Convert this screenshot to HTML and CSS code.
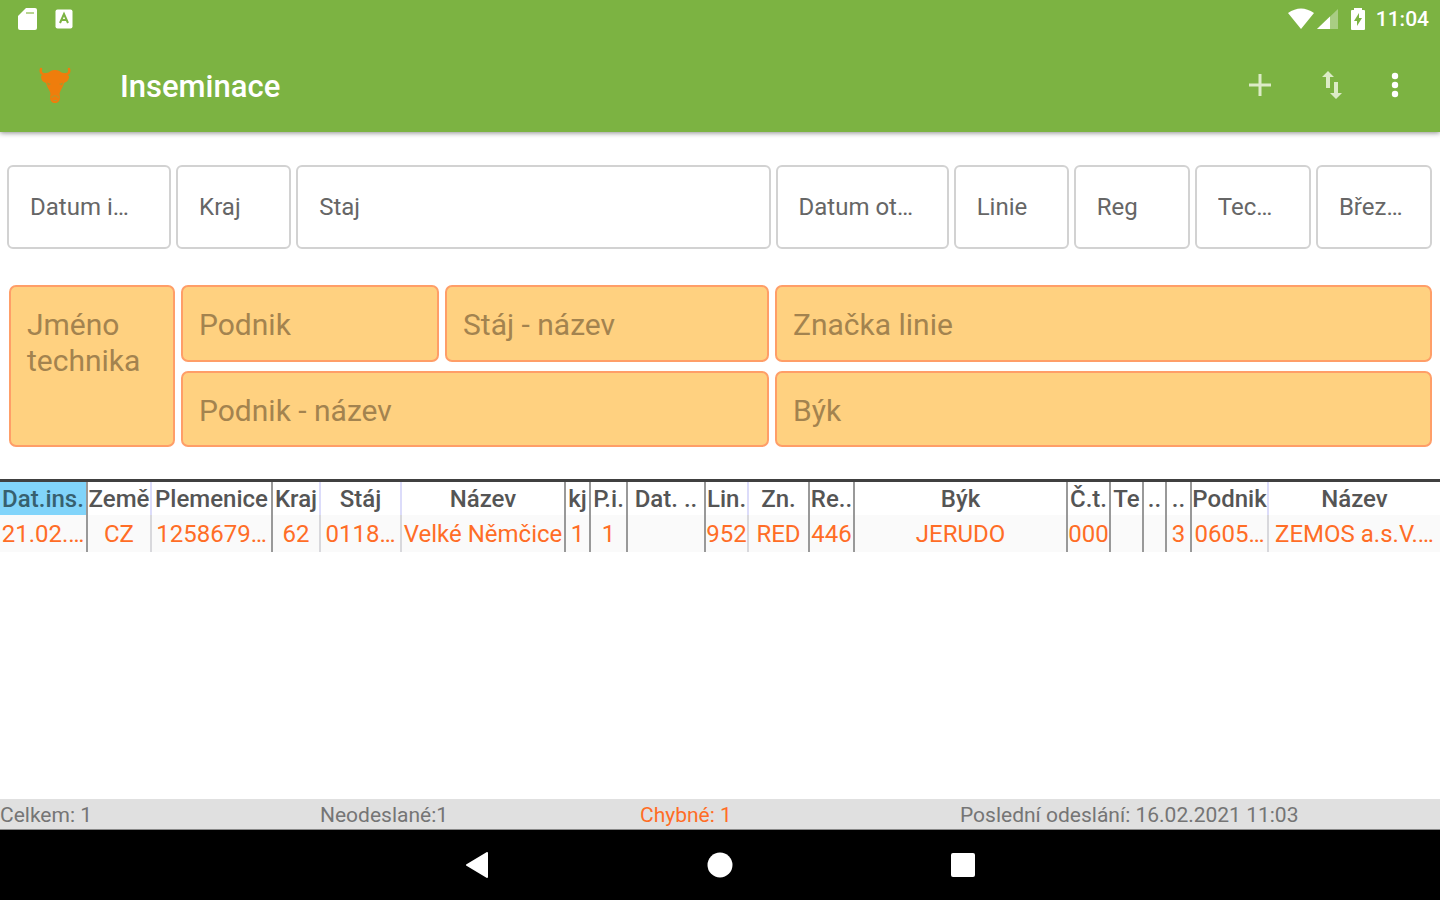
FILE: index.html
```html
<!DOCTYPE html>
<html lang="cs">
  <head>
    <meta charset="UTF-8" />
    <meta name="viewport" content="width=device-width, initial-scale=1.0" />
    <title>Inseminace</title>
    <link rel="stylesheet" href="styles.css">
  </head>
  <body>
    <header class="top">
      <div class="status-bar">
        <div class="status-group">
          <svg width="20" height="22" viewBox="0 0 20 22"><path fill="#fff" d="M8 0h9a2 2 0 0 1 2 2v18a2 2 0 0 1-2 2H2a2 2 0 0 1-2-2V8z"/><path stroke="#b8d591" stroke-width="2" d="M8 5h8"/></svg>
          <svg width="18" height="20" viewBox="0 0 18 20"><rect width="17" height="19" x="0.5" y="0.5" rx="2" fill="#fff"/><path fill="none" stroke="#7cb342" stroke-width="2" d="M5 14l4-9 4 9M7 11h4"/></svg>
        </div>
        <div class="status-group status-right">
          <svg width="26" height="22" viewBox="0 0 26 22"><path fill="#fff" d="M0 5Q13-4 26 5L13 21z"/></svg>
          <svg width="22" height="22" viewBox="0 0 22 22"><path fill="#fff" opacity=".35" d="M0 21L21 1v20z"/><path fill="#fff" d="M0 21L13 8.500V21z"/></svg>
          <svg class="battery" width="16" height="24" viewBox="0 0 16 24"><path fill="#fff" d="M4 1h8v2h2a1 1 0 0 1 1 1v18a1 1 0 0 1-1 1H2a1 1 0 0 1-1-1V4a1 1 0 0 1 1-1h2z"/><path fill="#7cb342" d="M9 6l-5 8h3v5l5-8H9z"/></svg>
          <span class="clock">11:04</span>
        </div>
      </div>
      <div class="app-bar">
        <svg class="logo" width="32" height="36" viewBox="0 0 32 36">
          <path fill="none" stroke="#ef7d0c" stroke-width="2.500" stroke-linecap="round" d="M2 2C1 6 3 8 8 7.500M30 2c1 4-1 6-6 5.500"/>
          <path fill="#ef7d0c" d="M7 6c3 0 4-2 6-2.500 1-.7 5-.7 6 0 2 .5 3 2.500 6 2.500l5 3c0 4-2 6-5 7-1 4-3 6-4 9-1 2 0 3 0 5 0 4-2 6-5 6s-5-2-5-6c0-2 1-3 0-5-1-3-3-5-4-9-3-1-5-3-5-7z"/>
          <path fill="#a89a2b" d="M8 15.500l4 1.500-3 1.500zM24 15.500L20 17l3 1.500z"/>
          <path fill="none" stroke="#b8982a" stroke-width="1.200" d="M12.500 31c1-3 6-3 7 0M14 33.500h4"/>
        </svg>
        <h1 class="title">Inseminace</h1>
        <div class="actions">
          <button class="icon-btn" aria-label="Přidat"><svg width="24" height="24" viewBox="0 0 24 24"><path stroke="#dcebc6" stroke-width="3" d="M12 1v22M1 12h22"/></svg></button>
          <button class="icon-btn" aria-label="Seřadit"><svg width="20" height="28" viewBox="0 0 20 28"><path fill="#dcebc6" d="M6 0l6 6H8v11H4V6H0zM14 28l-6-6h4V11h4v11h4z"/></svg></button>
          <button class="icon-btn menu-btn" aria-label="Nabídka"><svg width="8" height="26" viewBox="0 0 8 26"><g fill="#fff"><circle cx="4" cy="4" r="3.200"/><circle cx="4" cy="13" r="3.200"/><circle cx="4" cy="22" r="3.200"/></g></svg></button>
        </div>
      </div>
    </header>

    <main class="content">
      <form class="filters">
        <input class="filter" type="text" aria-label="Datum inseminace" placeholder="Datum i…">
        <input class="filter" type="text" aria-label="Kraj" placeholder="Kraj">
        <input class="filter" type="text" aria-label="Staj" placeholder="Staj">
        <input class="filter" type="text" aria-label="Datum otelení" placeholder="Datum ot…">
        <input class="filter" type="text" aria-label="Linie" placeholder="Linie">
        <input class="filter" type="text" aria-label="Registr" placeholder="Reg">
        <input class="filter" type="text" aria-label="Technik" placeholder="Tec…">
        <input class="filter" type="text" aria-label="Březost" placeholder="Břez…">
      </form>

      <section class="details">
        <textarea class="detail technician" aria-label="Jméno technika" placeholder="Jméno technika" readonly></textarea>
        <input class="detail" type="text" aria-label="Podnik" placeholder="Podnik" readonly>
        <input class="detail" type="text" aria-label="Stáj - název" placeholder="Stáj - název" readonly>
        <input class="detail" type="text" aria-label="Značka linie" placeholder="Značka linie" readonly>
        <input class="detail company" type="text" aria-label="Podnik - název" placeholder="Podnik - název" readonly>
        <input class="detail" type="text" aria-label="Býk" placeholder="Býk" readonly>
      </section>

      <table class="records">
        <colgroup>
          <col class="w-date"><col class="w-country"><col class="w-cow"><col class="w-region"><col class="w-stable">
          <col class="w-stable-name"><col class="w-kj"><col class="w-pi"><col class="w-birth"><col class="w-line">
          <col class="w-mark"><col class="w-reg"><col class="w-bull"><col class="w-ct"><col class="w-te">
          <col class="w-a"><col class="w-b"><col class="w-company"><col class="w-company-name">
        </colgroup>
        <thead>
          <tr>
            <th class="sorted">Dat.ins.</th>
            <th class="soft">Země</th>
            <th>Plemenice</th>
            <th class="soft">Kraj</th>
            <th class="soft">Stáj</th>
            <th>Název</th>
            <th>kj</th>
            <th>P.i.</th>
            <th>Dat. ..</th>
            <th class="soft">Lin.</th>
            <th>Zn.</th>
            <th>Re..</th>
            <th>Býk</th>
            <th>Č.t.</th>
            <th>Te</th>
            <th>..</th>
            <th>..</th>
            <th class="soft">Podnik</th>
            <th>Název</th>
          </tr>
        </thead>
        <tbody>
          <tr>
            <td>21.02.…</td>
            <td class="soft">CZ</td>
            <td>1258679…</td>
            <td class="soft">62</td>
            <td class="soft">0118…</td>
            <td>Velké Němčice</td>
            <td>1</td>
            <td>1</td>
            <td></td>
            <td class="soft">952</td>
            <td>RED</td>
            <td>446</td>
            <td>JERUDO</td>
            <td>000</td>
            <td></td>
            <td></td>
            <td>3</td>
            <td class="soft">0605…</td>
            <td>ZEMOS a.s.V.…</td>
          </tr>
        </tbody>
      </table>
    </main>

    <footer class="summary">
      <span>Celkem: 1</span>
      <span>Neodeslané:1</span>
      <span class="error">Chybné: 1</span>
      <span>Poslední odeslání: 16.02.2021 11:03</span>
    </footer>

    <nav class="nav-bar">
      <button class="nav-btn" aria-label="Zpět"><svg width="24" height="26" viewBox="0 0 24 26"><path fill="#fff" stroke="#fff" stroke-width="2" stroke-linejoin="round" d="M22 1v24L2 13z"/></svg></button>
      <button class="nav-btn" aria-label="Domů"><svg width="26" height="26" viewBox="0 0 26 26"><circle cx="13" cy="13" r="12.500" fill="#fff"/></svg></button>
      <button class="nav-btn" aria-label="Přehled"><svg width="24" height="24" viewBox="0 0 24 24"><rect width="24" height="24" rx="2" fill="#fff"/></svg></button>
    </nav>
  </body>
</html>
```
FILE: styles.css
```css
* {
  box-sizing: border-box;
}
body {
  margin: 0;
  min-height: 100vh;
  display: flex;
  flex-direction: column;
  background: #fff;
  color: #555;
  font-family: Roboto, "Liberation Sans", sans-serif;
}
button {
  padding: 0;
  border: 0;
  background: none;
}
svg {
  display: block;
}

/* header */
.top {
  background: #7cb342;
  box-shadow: 0 1px 5px rgba(0, 0, 0, 0.45);
}
.status-bar {
  display: flex;
  justify-content: space-between;
  height: 38px;
  padding: 0 11px 0 18px;
}
.status-group {
  display: flex;
  align-items: center;
  gap: 17px;
}
.status-right {
  gap: 3px;
}
.battery {
  margin: 0 7px 0 8px;
}
.clock {
  color: #fff;
  font-size: 21px;
  font-weight: 500;
  line-height: 40px;
}
.app-bar {
  display: flex;
  align-items: center;
  height: 94px;
  padding: 0 18px 0 39px;
}
.title {
  margin: 0 0 0 49px;
  padding-top: 3px;
  color: #fff;
  font-size: 31px;
  font-weight: 500;
  line-height: 36px;
}
.actions {
  display: flex;
  margin-left: auto;
}
.icon-btn {
  display: flex;
  align-items: center;
  justify-content: center;
  width: 72px;
  height: 72px;
}
.menu-btn {
  width: 54px;
}

/* filters */
.content {
  flex: 1;
}
.filters {
  display: grid;
  grid-template-columns: 164fr 115fr 474fr 173fr 115fr 116fr 116fr 116fr;
  gap: 5px;
  padding: 33px 8px 0 7px;
}
.filter {
  min-width: 0;
  height: 84px;
  padding: 0 21px;
  border: 2px solid #d2d2d2;
  border-radius: 6px;
  background: #fff;
  font: 24px Roboto, "Liberation Sans", sans-serif;
}
.filter::placeholder {
  color: #666;
  opacity: 1;
}

/* details of the selected record */
.details {
  display: grid;
  grid-template-columns: 166fr 258fr 324fr 657fr;
  grid-template-rows: 77px 76px;
  gap: 9px 6px;
  padding: 36px 8px 0 9px;
}
.detail {
  min-width: 0;
  padding: 3px 16px 0;
  border: 2px solid #ff9e68;
  border-radius: 7px;
  background: #ffd180;
  font: 30px/36px Roboto, "Liberation Sans", sans-serif;
}
.detail::placeholder {
  color: #a3834f;
  opacity: 1;
}
.technician {
  grid-row: span 2;
  padding-top: 20px;
  resize: none;
}
.company {
  grid-column: span 2;
}

/* records */
.records {
  width: 100%;
  margin-top: 32px;
  border-top: 3px solid #404040;
  border-spacing: 0;
  table-layout: fixed;
  text-align: center;
}
.records th,
.records td {
  padding: 2px 0 0;
  border-right: 2px solid #999;
  overflow: hidden;
  white-space: nowrap;
}
.records th:last-child,
.records td:last-child {
  border-right: 0;
}
.records th {
  height: 33px;
  font-size: 24px;
  font-weight: 500;
  line-height: 31px;
}
.records td {
  height: 37px;
  background: #fafafa;
  color: #ff6d26;
  font-size: 24px;
  line-height: 35px;
}
.records th.sorted {
  background: #81d4fa;
  color: #37606f;
}
.records th.soft {
  border-right-color: #dcdcfa;
}
.records td.soft {
  border-right-color: #d8d8dc;
}
.w-date { width: 88px; }
.w-country { width: 64px; }
.w-cow { width: 121px; }
.w-region { width: 48px; }
.w-stable { width: 81px; }
.w-stable-name { width: 164px; }
.w-kj { width: 25px; }
.w-pi { width: 37px; }
.w-birth { width: 78px; }
.w-line { width: 43px; }
.w-mark { width: 61px; }
.w-reg { width: 45px; }
.w-bull { width: 213px; }
.w-ct { width: 43px; }
.w-te { width: 33px; }
.w-a { width: 23px; }
.w-b { width: 25px; }
.w-company { width: 77px; }
.w-company-name { width: 171px; }

/* bottom */
.summary {
  display: grid;
  grid-template-columns: 2fr 2fr 2fr 3fr;
  padding-top: 2px;
  border-bottom: 1px solid #888;
  background: #e0e0e0;
  color: #757575;
  font-size: 21px;
  line-height: 28px;
}
.error {
  color: #ff6d26;
}
.nav-bar {
  display: flex;
  justify-content: center;
  gap: 171px;
  height: 70px;
  background: #000;
}
.nav-btn {
  display: flex;
  align-items: center;
  justify-content: center;
  width: 72px;
}
```
